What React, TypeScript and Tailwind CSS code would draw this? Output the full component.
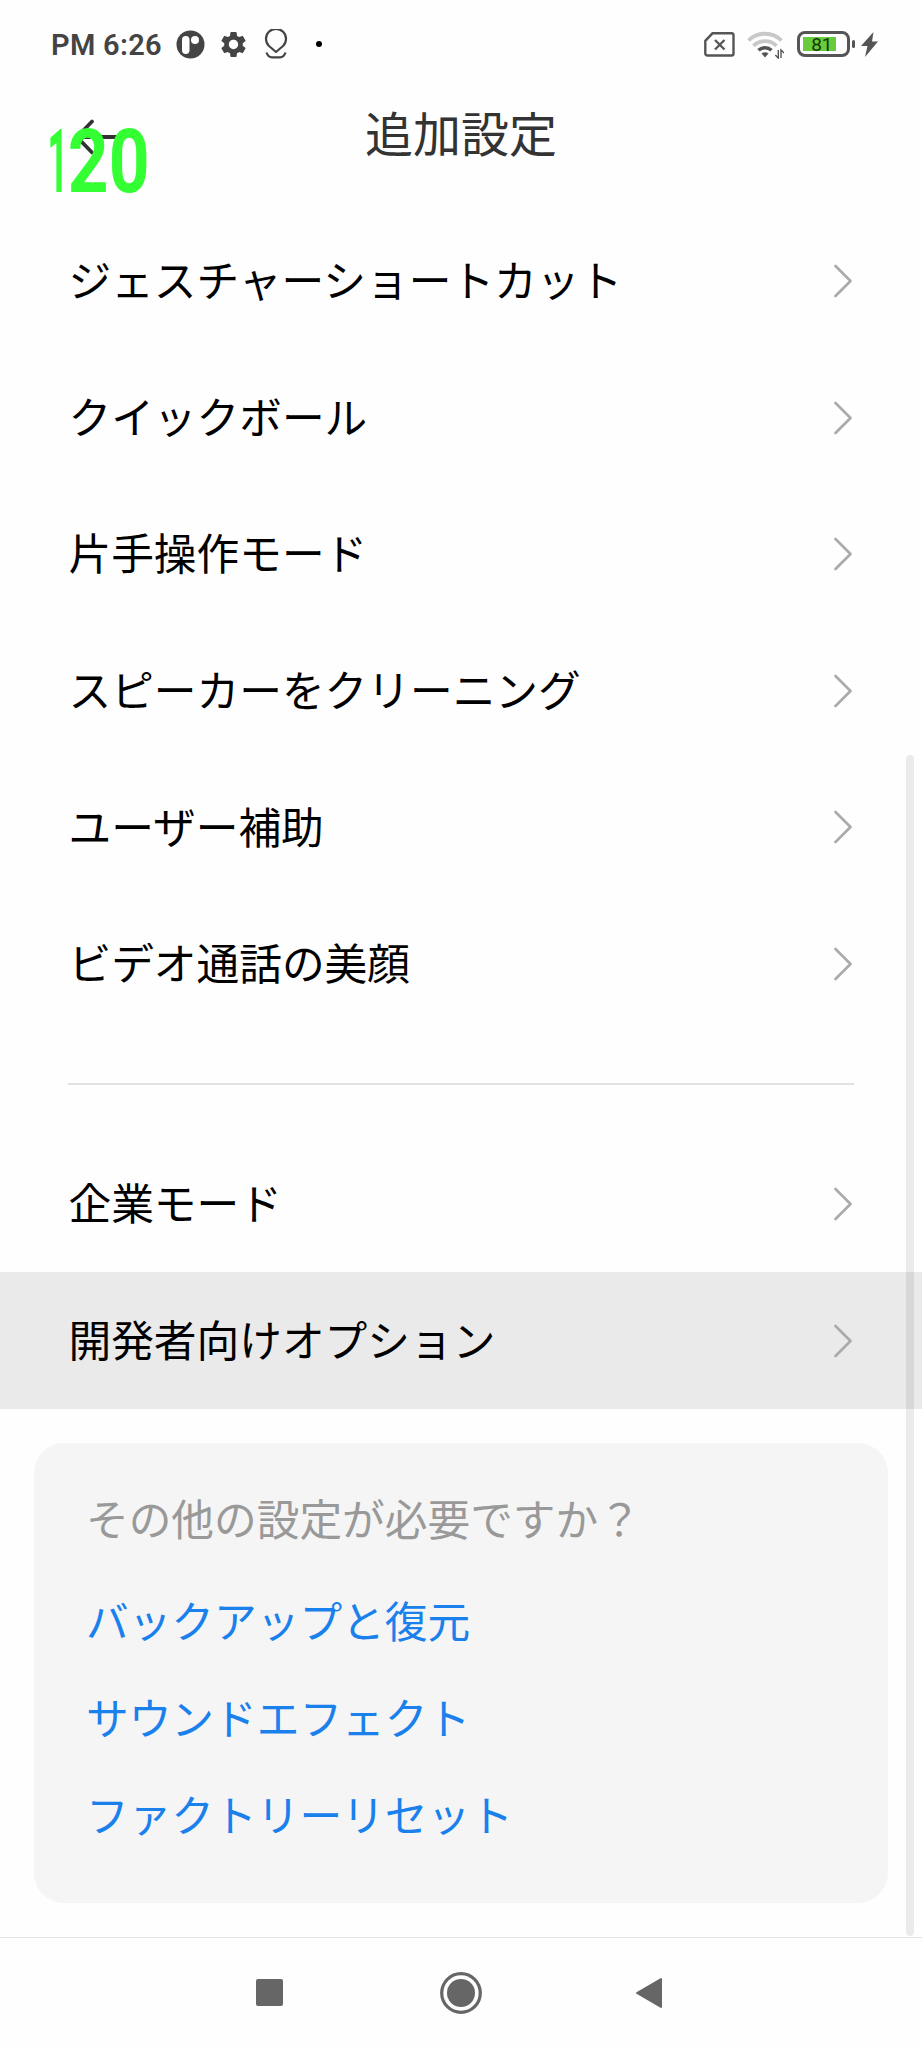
import React from "react";
import { MdSettings } from "react-icons/md";

const mainItems = [
  "ジェスチャーショートカット",
  "クイックボール",
  "片手操作モード",
  "スピーカーをクリーニング",
  "ユーザー補助",
  "ビデオ通話の美顔",
];

const extraItems = [
  { name: "企業モード", pressed: false },
  { name: "開発者向けオプション", pressed: true },
];

const links = ["バックアップと復元", "サウンドエフェクト", "ファクトリーリセット"];

function StatusBar() {
  return (
    <div className="flex h-[90px] items-center justify-between pl-[51px] pr-11 text-[#444]">
      <div className="flex items-center">
        <span className="w-[125px] whitespace-nowrap font-[Roboto,sans-serif] text-[29px] font-semibold leading-none tracking-[0.3px]">
          PM 6:26
        </span>
        <svg width="29" height="29" viewBox="0 0 29 29" className="-mt-0.5">
          <circle cx="14.5" cy="14.5" r="14" fill="#444" />
          <rect x="6" y="6" width="7.5" height="18" rx="3.7" fill="#fff" />
          <circle cx="19" cy="10" r="4" fill="#fff" />
        </svg>
        <MdSettings className="-mt-0.5 ml-[13px] size-[31px]" />
        <svg
          width="24"
          height="30"
          viewBox="0 0 24 30"
          fill="none"
          stroke="#444"
          strokeWidth="2.2"
          className="-mt-0.5 ml-[15px]"
        >
          <path d="M12 23 5 17a10 10 0 1 1 14 0z" strokeLinejoin="round" />
          <path d="M2.5 23.500c1 3 3 4.800 5.500 4.800h8c2.500 0 4.500-1.800 5.500-4.800" />
        </svg>
        <span className="-mt-0.5 ml-[28px] size-[5.5px] rounded-full bg-black" />
      </div>
      <div className="-mt-0.5 flex items-center">
        <svg width="31" height="25" viewBox="0 0 31 25" fill="none" stroke="#555" strokeWidth="2.4">
          <path d="M8.500 1.300H27.500a2 2 0 0 1 2 2V21.500a2 2 0 0 1-2 2H3.300a2 2 0 0 1-2-2V8.800z" />
          <path d="m11 8 9.500 9.500M20.500 8 11 17.500" strokeWidth="2.3" />
        </svg>
        <svg width="37" height="28" viewBox="0 0 37 28" fill="none" className="ml-3 mt-0.5">
          <path d="M1.500 9.500a23.500 23.500 0 0 1 33 0" stroke="#c8c8c8" strokeWidth="3.800" />
          <path d="M6.500 14.800a16.500 16.500 0 0 1 23 0" stroke="#c8c8c8" strokeWidth="3.800" />
          <path d="M11.500 19.300a9.500 9.500 0 0 1 13 0" stroke="#555" strokeWidth="3.600" />
          <path d="M14.500 22.500q3.500-2.500 7 0L18 26.500z" fill="#555" />
          <path d="M31.300 19v8l-3-3M34 27v-8l3 3" stroke="#555" strokeWidth="1.400" />
        </svg>
        <div className="ml-[13px] flex h-[26px] w-[53px] rounded-[8px] border-[3.500px] border-[#555] p-[3px]">
          <div className="flex h-[14px] w-[33px] items-center justify-end bg-[#67cb3b] pr-[3px] font-[Roboto,sans-serif] text-[19px] leading-none text-[#123806]">
            81
          </div>
        </div>
        <span className="ml-[2px] h-2 w-[3.500px] rounded-sm bg-[#555]" />
        <svg width="17" height="25" viewBox="0 0 17 25" className="ml-[6px]">
          <path d="M12.500 0 0 14h6.500L4 25 17 9.500h-6z" fill="#555" />
        </svg>
      </div>
    </div>
  );
}

function Chevron() {
  return (
    <svg width="18" height="34" viewBox="0 0 18 34" fill="none" className="shrink-0">
      <path
        d="M1.500 2 16.500 17 1.500 32"
        stroke="#aaa"
        strokeWidth="2.600"
        strokeLinecap="round"
        strokeLinejoin="round"
      />
    </svg>
  );
}

function Row({ name, pressed }: { name: string; pressed?: boolean }) {
  return (
    <div
      className={`flex h-[136.600px] items-center justify-between pl-[68.500px] pr-[70px] ${
        pressed ? "bg-[#eaeaea]" : ""
      }`}
    >
      <span className="pb-[5px] text-[42.700px] leading-none text-black">{name}</span>
      <Chevron />
    </div>
  );
}

function NavBar() {
  return (
    <div className="mt-auto flex h-[111.500px] items-center border-t-[1.500px] border-[#e4e4e4] pl-[256px] text-[#666]">
      <span className="size-[27px] rounded-[2px] bg-current" />
      <svg width="42" height="42" viewBox="0 0 42 42" className="ml-[156.500px]">
        <circle cx="21" cy="21" r="19.300" fill="none" stroke="currentColor" strokeWidth="3.200" />
        <circle cx="21" cy="21" r="14" fill="currentColor" />
      </svg>
      <svg width="28" height="32" viewBox="0 0 28 32" className="ml-[153.500px]">
        <path
          d="M2 16 26 2v28z"
          fill="currentColor"
          stroke="currentColor"
          strokeWidth="2"
          strokeLinejoin="round"
        />
      </svg>
    </div>
  );
}

function App() {
  return (
    <div
      lang="ja"
      className="relative flex h-[2048px] w-[922px] flex-col overflow-hidden bg-[#fefefe] font-['Noto_Sans_CJK_JP',sans-serif]"
    >
      <StatusBar />

      <header className="relative flex h-[88px] items-center justify-center">
        <h1 className="pb-[7px] text-[48px] leading-none text-[#333]">追加設定</h1>
        <svg
          width="50"
          height="36"
          viewBox="0 0 50 36"
          fill="none"
          stroke="#333"
          strokeWidth="3.800"
          strokeLinecap="round"
          strokeLinejoin="round"
          className="absolute left-[75px] top-[29px]"
        >
          <path d="M17 2.500 2 18l15 15.500M2 18h45" />
        </svg>
        {/* refresh rate overlay */}
        <span className="absolute left-[27px] top-[27px] origin-left scale-x-[0.8] whitespace-nowrap font-[Roboto,sans-serif] text-[89px] font-bold leading-none text-[#33ff33]">
          <span className="inline-block origin-right scale-x-[0.5]">1</span>20
        </span>
      </header>

      <main className="pt-[34.700px]">
        {mainItems.map((name) => (
          <Row key={name} name={name} />
        ))}
        <hr className="mx-[68px] mb-[51px] mt-[50.600px] border-t-2 border-[#e2e2e2]" />
        {extraItems.map((item) => (
          <Row key={item.name} name={item.name} pressed={item.pressed} />
        ))}

        <section className="ml-[34px] mt-[34px] h-[460px] w-[854px] rounded-[30px] bg-[#f5f5f5] pl-[52px] pt-[47px]">
          <p className="mb-[27px] text-[42.700px] leading-[54px] text-[#999]">
            その他の設定が必要ですか？
          </p>
          {links.map((link) => (
            <a key={link} className="block text-[42.700px] leading-[97px] text-[#1a80ec]">
              {link}
            </a>
          ))}
        </section>
      </main>

      <NavBar />

      {/* scrollbar */}
      <div className="absolute right-2 top-[755px] h-[1181px] w-2 rounded-full bg-black/[0.075]" />
    </div>
  );
}

export default App;
